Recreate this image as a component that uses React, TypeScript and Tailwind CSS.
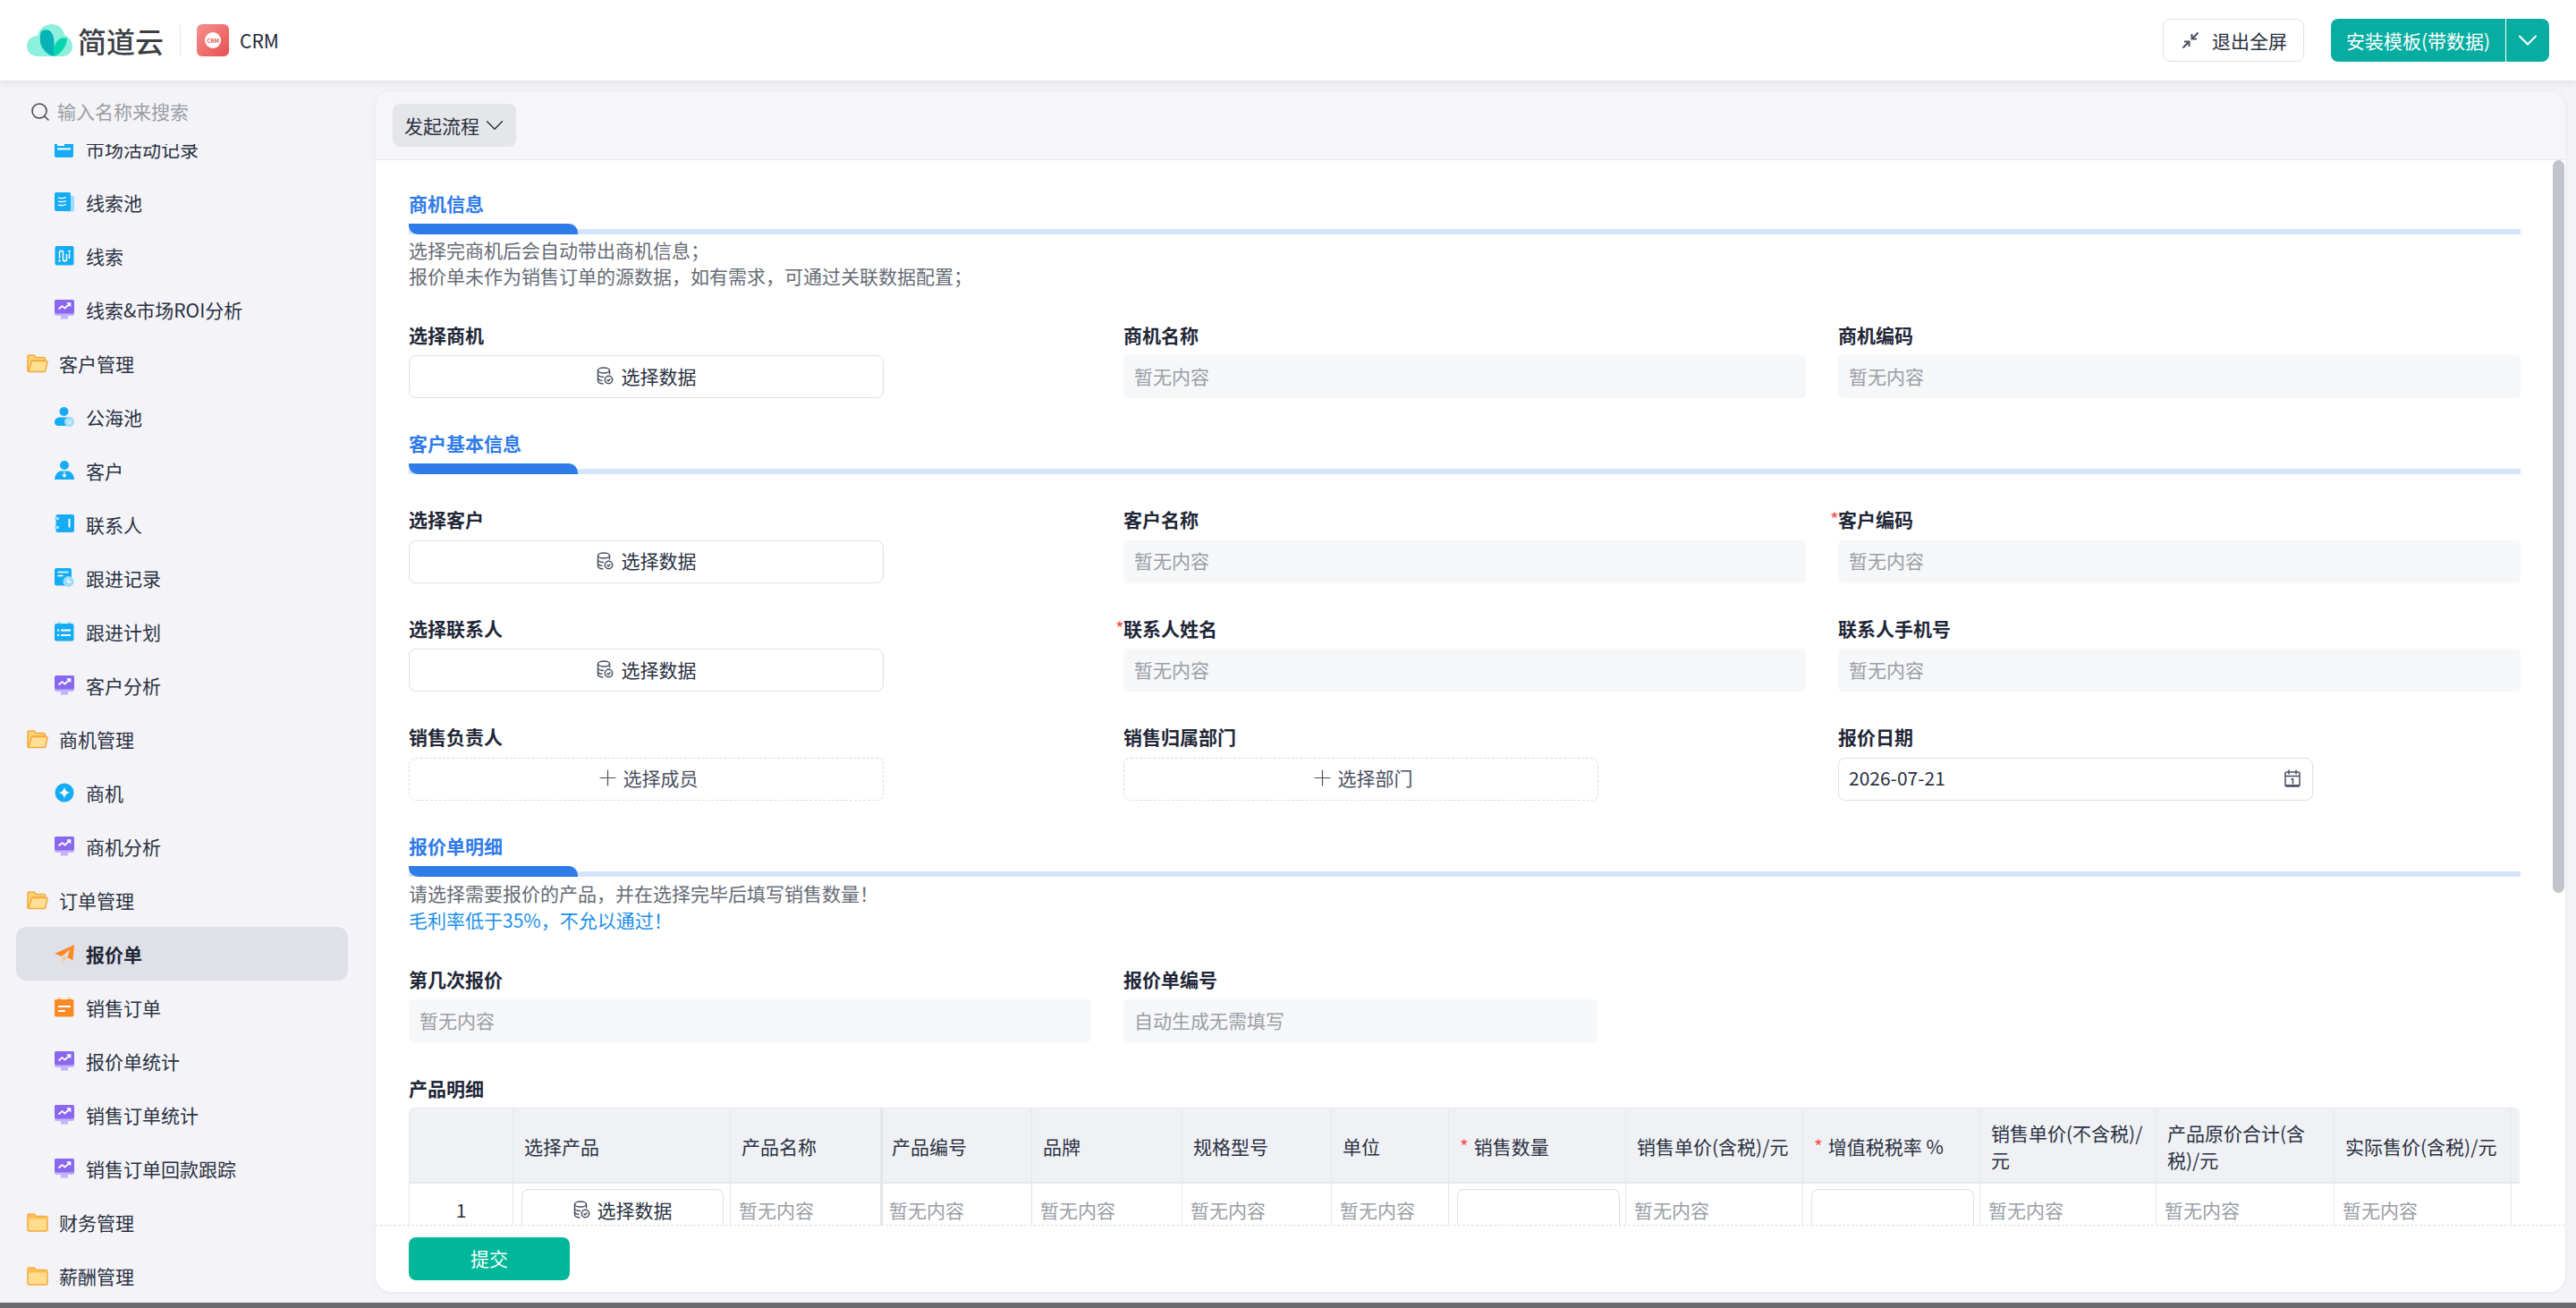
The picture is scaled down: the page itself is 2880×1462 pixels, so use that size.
import { ChevronDown, Plus, Search } from "lucide-react";

// ---- icons ----
function Logo() {
  return (
    <svg width="51" height="36" viewBox="0 0 51 36">
      <path d="M12 36C5 36 0 31 0 24.5 0 18 5 13 12 13 14 5 20 0 28 0c7 0 13 5 14 12 5 2 9 7 9 13 0 6-5 11-11 11Z" fill="#8df0dc" />
      <path d="M16 8c5-3 11-2 13 4 2 5 2 16 1 24-6-1-14-8-15-16-.5-5 0-9 1-12Z" fill="#05b3b8" />
      <path d="M30 36c-1-6 1-16 6-19 3-2 7-2 9-1 0 8-7 18-15 20Z" fill="#06d6b0" />
    </svg>
  );
}

function CrmIcon() {
  return (
    <div className="flex h-[36px] w-[36px] items-center justify-center rounded-[6px] bg-gradient-to-br from-[#f29090] to-[#e84e4e]">
      <div className="flex h-[18px] w-[18px] items-center justify-center rounded-full bg-white text-[6.5px] font-bold leading-none tracking-[-0.2px] text-[#ee5a5a]">
        CRM
      </div>
    </div>
  );
}

function ExitFull() {
  return (
    <svg width="20" height="20" viewBox="0 0 20 20" fill="none" stroke="#4a5060" strokeWidth="2">
      <path d="M18.5 1.5 11.5 8.5M11.5 3v5.5H17" />
      <path d="M1.5 18.5 8 12M3 11.5h5.5V17" />
    </svg>
  );
}

function DataIcon() {
  return (
    <svg width="19" height="20" viewBox="0 0 19 20" fill="none" stroke="#4a5060" strokeWidth="1.5">
      <ellipse cx="8" cy="4" rx="6.5" ry="3" />
      <path d="M1.5 4v12c0 1.700 3 3 6 3M14.500 4v4.500M1.500 8.500c0 1.700 3 3 6.500 3M1.500 12.500c0 1.500 2 2.700 5 3" />
      <circle cx="13.500" cy="14.500" r="4.200" />
      <path d="m11.700 14.500 1.400 1.400 2.300-2.500" />
    </svg>
  );
}

function CalendarIcon() {
  return (
    <svg width="18" height="20" viewBox="0 0 18 20" fill="none" stroke="#4a5060" strokeWidth="1.500">
      <rect x="1" y="3" width="16" height="16" rx="1.500" />
      <path d="M5 .5v5M13 .5v5M1 7.500h16M9.500 10v6.500M7.500 11.500l2-1.500" />
      <path d="M1 18h16" strokeWidth="2" />
    </svg>
  );
}

function FolderOpen() {
  return (
    <svg width="24" height="21" viewBox="0 0 24 21">
      <path d="M1 18V2.500C1 1.500 1.700 1 2.500 1H8l2.500 2.500H19c1 0 1.500.600 1.500 1.500v2H6.500L3 19.500C1.800 19.500 1 19 1 18Z" fill="#fbd27a" stroke="#f5a93a" strokeWidth="1.500" />
      <path d="M5.500 7.500H22c.8 0 1.200.600 1 1.300L20.800 18.500c-.2.700-.8 1-1.500 1H3c-.8 0-1.100-.500-.9-1.200Z" fill="#ffdf94" stroke="#f5a93a" strokeWidth="1.500" />
    </svg>
  );
}

function FolderClosed() {
  return (
    <svg width="24" height="21" viewBox="0 0 24 21">
      <path d="M1 18V2.500C1 1.500 1.700 1 2.500 1H8l2.500 2.500H21c1 0 2 .800 2 2V18c0 1-.800 2-2 2H3c-1.200 0-2-.800-2-2Z" fill="#ffdc8e" stroke="#f5a93a" strokeWidth="1.500" />
      <path d="M1.500 6.500V3c0-1 .500-1.500 1.500-1.500h5L10.300 4H21c1 0 1.500.500 1.500 1.500v1Z" fill="#f9bf57" />
    </svg>
  );
}

function Monitor() {
  return (
    <svg width="22" height="22" viewBox="0 0 22 22">
      <path d="M7.500 17h7l.8 4.500H6.700Z" fill="#c4b2fb" />
      <rect x="0" y="0" width="22" height="18" rx="2" fill="#c4b2fb" />
      <rect x="0" y="0" width="22" height="15.500" rx="2" fill="#8a68ee" />
      <path d="m4.500 10.500 4-3.500 3 2.500 5.500-5M13.800 4h3.700v3.500" fill="none" stroke="#fff" strokeWidth="1.700" />
    </svg>
  );
}

function Sheet() {
  return (
    <svg width="22" height="22" viewBox="0 0 22 22">
      <rect y="1" width="21" height="20" rx="2" fill="#16acf4" />
      <path d="M3 7h8M3 11.500h15" stroke="#fff" strokeWidth="2" />
    </svg>
  );
}

function WaveDoc() {
  return (
    <svg width="22" height="22" viewBox="0 0 22 22">
      <rect x="14" y="4" width="8" height="17.500" rx="1.500" fill="#9bdcfb" />
      <rect width="18" height="21" rx="2" fill="#16acf4" />
      <path d="M4 6.500c2-1.500 3 1 5 0s2-1 4-.500M4 10.500c2-1.500 3 1 5 0s2-1 4-.500M4 14.500c2-1.500 3 1 5 0s2-1 4-.500" fill="none" stroke="#fff" strokeWidth="1.200" />
    </svg>
  );
}

function LeadIcon() {
  return (
    <svg width="22" height="22" viewBox="0 0 22 22">
      <rect x=".5" width="21" height="21.500" rx="2" fill="#16acf4" />
      <path d="M5.500 14V7c0-2.500 4-2.500 4 0v8c0 2.500 4 2.500 4 0v-6M16.500 8v6" fill="none" stroke="#fff" strokeWidth="1.500" />
      <circle cx="5.500" cy="16.500" r="1.200" fill="#fff" />
      <circle cx="16.500" cy="6" r="1.200" fill="#fff" />
    </svg>
  );
}

function PoolPerson() {
  return (
    <svg width="22" height="22" viewBox="0 0 22 22">
      <circle cx="10.500" cy="5" r="5" fill="#16acf4" />
      <path d="M0 17c0-4 3-5.500 6-5.500h9c3 0 4 1 4 3v6.500H4.500C2 21 0 19.500 0 17Z" fill="#16acf4" />
      <circle cx="16.500" cy="16.500" r="5.500" fill="#9bdcfb" />
      <path d="M13.500 15.500c1.500-1 2.500.8 5.500-.2M13.500 18c1.500-1 2.500.8 5.500-.2" fill="none" stroke="#fff" strokeWidth="1" />
    </svg>
  );
}

function Person() {
  return (
    <svg width="22" height="22" viewBox="0 0 22 22">
      <circle cx="11" cy="5" r="5" fill="#16acf4" />
      <path d="M0 21c0-5 3.500-9 7-9.500h8c3.500.500 7 4.500 7 9.500Z" fill="#16acf4" />
      <path d="M11 12.500v4.500M9.500 16h3L11 18Z" stroke="#fff" strokeWidth="1.200" fill="#fff" />
    </svg>
  );
}

function Notebook() {
  return (
    <svg width="22" height="22" viewBox="0 0 22 22">
      <rect x="1.500" width="20.500" height="20" rx="2" fill="#16acf4" />
      <path d="M0 4.500h5M0 14.500h5" stroke="#9bdcfb" strokeWidth="3" />
      <path d="M16.500 5v9.500" stroke="#fff" strokeWidth="2" />
    </svg>
  );
}

function Record() {
  return (
    <svg width="22" height="22" viewBox="0 0 22 22">
      <rect width="19" height="19.500" rx="2" fill="#16acf4" />
      <path d="M3.500 4.500h12M3.500 8.500h6" stroke="#fff" strokeWidth="1.700" />
      <circle cx="15.500" cy="15" r="6" fill="#9bdcfb" />
      <path d="M15 11.500v4h3.500" fill="none" stroke="#fff" strokeWidth="1.300" />
    </svg>
  );
}

function Plan() {
  return (
    <svg width="22" height="22" viewBox="0 0 22 22">
      <path d="M4 0h3v4H4ZM15 0h3v4h-3Z" fill="#9bdcfb" />
      <rect y="2" width="21.500" height="19.500" rx="2" fill="#16acf4" />
      <path d="M7 9.500h11M7 15h11M3 9.500h2M3 15h2" stroke="#fff" strokeWidth="1.800" />
    </svg>
  );
}

function OrderCal() {
  return (
    <svg width="22" height="22" viewBox="0 0 22 22">
      <path d="M4 0h3v4H4ZM15 0h3v4h-3Z" fill="#ffc387" />
      <rect y="2" width="21.500" height="19.500" rx="2" fill="#fb8a24" />
      <path d="M4 10h14M4 15h8" stroke="#fff" strokeWidth="2" />
    </svg>
  );
}

function Chance() {
  return (
    <svg width="22" height="22" viewBox="0 0 22 22">
      <circle cx="11" cy="11" r="10.500" fill="#16acf4" />
      <path d="M11 4.500c.8 4 2.500 5.700 6.500 6.500-4 .8-5.700 2.500-6.500 6.500-.8-4-2.500-5.700-6.500-6.500 4-.8 5.700-2.500 6.500-6.500Z" fill="#fff" />
    </svg>
  );
}

function Plane() {
  return (
    <svg width="22" height="22" viewBox="0 0 22 22">
      <path d="M9 14.500 9.500 21l5-6Z" fill="#ffc387" />
      <path d="M0 11 22 1l-1.500 17.500-6-3.500L17 6.500 8 14Z" fill="#fb8a24" />
    </svg>
  );
}

// ---- sidebar ----
const menu = [
  { label: "市场活动记录", icon: <Sheet /> },
  { label: "线索池", icon: <WaveDoc /> },
  { label: "线索", icon: <LeadIcon /> },
  { label: "线索&市场ROI分析", icon: <Monitor /> },
  { label: "客户管理", group: "open" },
  { label: "公海池", icon: <PoolPerson /> },
  { label: "客户", icon: <Person /> },
  { label: "联系人", icon: <Notebook /> },
  { label: "跟进记录", icon: <Record /> },
  { label: "跟进计划", icon: <Plan /> },
  { label: "客户分析", icon: <Monitor /> },
  { label: "商机管理", group: "open" },
  { label: "商机", icon: <Chance /> },
  { label: "商机分析", icon: <Monitor /> },
  { label: "订单管理", group: "open" },
  { label: "报价单", icon: <Plane />, active: true },
  { label: "销售订单", icon: <OrderCal /> },
  { label: "报价单统计", icon: <Monitor /> },
  { label: "销售订单统计", icon: <Monitor /> },
  { label: "销售订单回款跟踪", icon: <Monitor /> },
  { label: "财务管理", group: "closed" },
  { label: "薪酬管理", group: "closed" },
];

function Sidebar() {
  return (
    <aside className="flex w-[420px] shrink-0 flex-col overflow-hidden bg-[#f3f3f8]">
      <div className="flex h-[71px] shrink-0 items-center gap-[7px] pb-[2px] pl-[33px] text-[#9a9ea6]">
        <Search size={24} strokeWidth={1.5} color="#444" />
        <span>输入名称来搜索</span>
      </div>
      <div className="flex-1 overflow-hidden">
        <div className="-mt-[25px]">
          {menu.map((m) =>
            m.group ? (
              <div key={m.label} className="ml-[18px] mr-[31px] flex h-[60px] items-center gap-[12px] pl-[12px] text-[#2a3141]">
                {m.group === "open" ? <FolderOpen /> : <FolderClosed />}
                <span>{m.label}</span>
              </div>
            ) : (
              <div
                key={m.label}
                className={
                  m.active
                    ? "ml-[18px] mr-[31px] flex h-[60px] items-center gap-[13px] rounded-[12px] bg-[#e0e1e8] pl-[43px] font-bold text-[#1f2737]"
                    : "ml-[18px] mr-[31px] flex h-[60px] items-center gap-[13px] pl-[43px] text-[#2a3141]"
                }
              >
                <span className="flex w-[22px] justify-center">{m.icon}</span>
                <span>{m.label}</span>
              </div>
            )
          )}
        </div>
      </div>
    </aside>
  );
}

// ---- form bits ----
function SectionTitle({ title }: { title: string }) {
  return (
    <div>
      <div className="pb-[2px] font-bold leading-[27px] text-[#2f7ce9]">{title}</div>
      <div className="relative mt-[7px] h-[12px] w-[2361px]">
        <div className="absolute bottom-0 left-0 h-[6px] w-full bg-[#d4e4fb]" />
        <div className="absolute left-0 top-0 h-[12px] w-[189px] rounded-bl-[10px] rounded-tr-[10px] bg-[#2f7ce9]" />
      </div>
    </div>
  );
}

function Label({ text, required }: { text: string; required?: boolean }) {
  return (
    <div className="relative mb-[7.5px] pb-[2px] font-bold leading-[27px] text-[#1f2737]">
      {required && <span className="absolute -left-[9px] top-0 font-normal text-[#f0504f]">*</span>}
      {text}
    </div>
  );
}

function Empty({ text = "暂无内容", narrow }: { text?: string; narrow?: boolean }) {
  return (
    <div className={narrow ? "flex h-[48px] w-[530px] items-center rounded-[5px] bg-[#f6f7f9] px-[12px] pb-[2px] text-[#9a9ea6]" : "flex h-[48px] items-center rounded-[5px] bg-[#f6f7f9] px-[12px] pb-[2px] text-[#9a9ea6]"}>
      {text}
    </div>
  );
}

function PickData() {
  return (
    <div className="flex h-[48px] w-[531px] items-center justify-center gap-[9px] rounded-[8px] border border-[#dcdfe5] pb-[2px] text-[#2a3141]">
      <DataIcon />
      <span>选择数据</span>
    </div>
  );
}

function PickDashed({ text }: { text: string }) {
  return (
    <div className="flex h-[48px] w-[531px] items-center justify-center gap-[3px] rounded-[8px] border border-dashed border-[#d9dbe0] pb-[2px] text-[#4a5060]">
      <Plus size={29} strokeWidth={1} />
      <span>{text}</span>
    </div>
  );
}

function Field({ label, required, children }: { label: string; required?: boolean; children: React.ReactNode }) {
  return (
    <div>
      <Label text={label} required={required} />
      {children}
    </div>
  );
}

// ---- product table ----
type Col = { head: string; w: string; req?: boolean; kind?: string; thick?: boolean };
const cols: Col[] = [
  { head: "", w: "w-[116px]", kind: "no" },
  { head: "选择产品", w: "w-[243px]", kind: "pick" },
  { head: "产品名称", w: "w-[168px]" },
  { head: "产品编号", w: "w-[169px]", thick: true },
  { head: "品牌", w: "w-[168px]" },
  { head: "规格型号", w: "w-[167px]" },
  { head: "单位", w: "w-[131px]" },
  { head: "销售数量", w: "w-[198px]", req: true, kind: "input" },
  { head: "销售单价(含税)/元", w: "w-[198px]" },
  { head: "增值税税率 %", w: "w-[198px]", req: true, kind: "input" },
  { head: "销售单价(不含税)/\n元", w: "w-[197px]" },
  { head: "产品原价合计(含\n税)/元", w: "w-[199px]" },
  { head: "实际售价(含税)/元", w: "w-[198px]" },
  { head: "", w: "w-[198px]" },
];

function ProductTable() {
  return (
    <div className="mt-[6.5px] w-[2360px] overflow-hidden rounded-t-[6px] border-l border-t border-[#e5e7ec]">
      <div className="flex w-max border-b-2 border-[#e7e8ed] bg-[#f0f1f5]">
        {cols.map((c, i) => (
          <div
            key={i}
            className={
              c.thick
                ? `flex h-[82px] shrink-0 items-center whitespace-pre-line border-l-2 border-r border-[#e2e4ea] pl-[10px] pr-[8px] pt-[2px] leading-[30px] text-[#2a3141] ${c.w}`
                : `flex h-[82px] shrink-0 items-center whitespace-pre-line border-r border-[#e5e7ec] pl-[12px] pr-[8px] pt-[2px] leading-[30px] text-[#2a3141] ${c.w}`
            }
          >
            {c.req && <span className="mr-[6px] text-[#f0504f]">*</span>}
            <span>{c.head}</span>
          </div>
        ))}
      </div>
      <div className="flex w-max">
        {cols.map((c, i) => (
          <div
            key={i}
            className={
              c.thick
                ? `h-[60px] shrink-0 border-l-2 border-r border-[#e2e4ea] pl-[7px] pt-[6px] ${c.w}`
                : `h-[60px] shrink-0 border-r border-[#e5e7ec] pl-[9px] pt-[6px] ${c.w}`
            }
          >
            {c.kind === "no" && <div className="flex h-[48px] items-center justify-center pb-[2px] pr-[9px] text-[#2a3141]">1</div>}
            {c.kind === "pick" && (
              <div className="flex h-[48px] w-[226px] items-center justify-center gap-[8px] rounded-[8px] border border-[#dcdfe5] pb-[2px] text-[#2a3141]">
                <DataIcon />
                <span>选择数据</span>
              </div>
            )}
            {c.kind === "input" && <div className="h-[48px] w-[182px] rounded-[8px] border border-[#dcdfe5]" />}
            {!c.kind && <div className="flex h-[48px] items-center pb-[2px] text-[#9a9ea6]">暂无内容</div>}
          </div>
        ))}
      </div>
    </div>
  );
}

export default function App() {
  return (
    <div className="flex h-[1462px] w-[2880px] flex-col overflow-hidden bg-[#f3f3f8] font-['Noto_Sans_CJK_SC','Noto_Sans',sans-serif] text-[21px] leading-[29px]">
      {/* top bar */}
      <header className="relative z-10 flex h-[90px] shrink-0 items-center bg-white pl-[30px] pr-[30px] shadow-[0_2px_10px_rgba(40,40,70,0.1)]">
        <Logo />
        <span className="ml-[6px] text-[32px] font-medium leading-none text-[#3d4045]">简道云</span>
        <div className="ml-[18px] h-[36px] w-px bg-[#e9eaee]" />
        <div className="ml-[18px]">
          <CrmIcon />
        </div>
        <span className="ml-[12px] text-[#1f2737]">CRM</span>
        <div className="ml-auto flex items-center gap-[30px]">
          <div className="flex h-[48px] w-[158px] items-center gap-[14px] rounded-[8px] border border-[#dde1e8] pl-[20px] text-[#2a3141]">
            <ExitFull />
            <span>退出全屏</span>
          </div>
          <div className="flex h-[48px] w-[244px] items-center rounded-[8px] bg-[#07ada1] text-white">
            <span className="flex h-full w-[196px] items-center justify-center border-r border-white">安装模板(带数据)</span>
            <span className="flex flex-1 justify-center">
              <ChevronDown size={36} strokeWidth={1.4} />
            </span>
          </div>
        </div>
      </header>

      <div className="flex min-h-0 flex-1">
        <Sidebar />
        {/* content card */}
        <main className="mb-[12px] mr-[12px] mt-[12px] flex min-w-0 flex-1 flex-col overflow-hidden rounded-[18px] bg-white shadow-[0_0_6px_rgba(40,40,70,0.06)]">
          <div className="flex h-[77px] shrink-0 items-center border-b border-[#e6e7eb] bg-[#f6f6fa] pl-[19px]">
            <div className="flex h-[48px] w-[138px] items-center gap-0 rounded-[8px] bg-[#e4e6ea] pl-[13px] text-[#2a3141]">
              <span>发起流程</span>
              <ChevronDown size={34} strokeWidth={1} />
            </div>
          </div>

          <div className="relative min-h-0 flex-1 overflow-hidden pl-[37px] pt-[35px]">
            {/* scrollbar thumb */}
            <div className="absolute right-[1px] top-0 h-[819px] w-[13px] rounded-full bg-[#c1c4cc]" />

            <SectionTitle title="商机信息" />
            <div className="mt-[3.5px] leading-[27px] text-[#666b75]">
              <div className="pb-[2px]">选择完商机后会自动带出商机信息；</div>
              <div className="pb-[2px]">报价单未作为销售订单的源数据，如有需求，可通过关联数据配置；</div>
            </div>
            <div className="mt-[37px] grid w-[2361px] grid-cols-3 gap-x-[36px]">
              <Field label="选择商机"><PickData /></Field>
              <Field label="商机名称"><Empty /></Field>
              <Field label="商机编码"><Empty /></Field>
            </div>

            <div className="mt-[36.5px]">
              <SectionTitle title="客户基本信息" />
            </div>
            <div className="mt-[37.5px] grid w-[2361px] grid-cols-3 gap-x-[36px] gap-y-[37px]">
              <Field label="选择客户"><PickData /></Field>
              <Field label="客户名称"><Empty /></Field>
              <Field label="客户编码" required><Empty /></Field>
              <Field label="选择联系人"><PickData /></Field>
              <Field label="联系人姓名" required><Empty /></Field>
              <Field label="联系人手机号"><Empty /></Field>
              <Field label="销售负责人"><PickDashed text="选择成员" /></Field>
              <Field label="销售归属部门"><PickDashed text="选择部门" /></Field>
              <Field label="报价日期">
                <div className="flex h-[48px] w-[531px] items-center justify-between rounded-[8px] border border-[#dcdfe5] pb-[2px] pl-[11px] pr-[13px] text-[#2a3141]">
                  <span>2026-07-21</span>
                  <CalendarIcon />
                </div>
              </Field>
            </div>

            <div className="mt-[37.5px]">
              <SectionTitle title="报价单明细" />
            </div>
            <div className="mt-[3.5px] leading-[28px] text-[#666b75]">
              <div className="pb-[2px]">请选择需要报价的产品，并在选择完毕后填写销售数量！</div>
              <div className="pb-[2px] text-[#1c8fe8]">毛利率低于35%，不允以通过！</div>
            </div>
            <div className="mt-[37px] grid w-[2361px] grid-cols-3 gap-x-[36px]">
              <Field label="第几次报价"><Empty /></Field>
              <Field label="报价单编号"><Empty text="自动生成无需填写" narrow /></Field>
            </div>

            <div className="mt-[37.5px] pb-[2px] font-bold leading-[27px] text-[#1f2737]">产品明细</div>
            <ProductTable />
          </div>

          <div className="flex h-[75px] shrink-0 items-start border-t border-dashed border-[#dddee2] pl-[37px] pt-[13px]">
            <div className="flex h-[48px] w-[180px] items-center justify-center rounded-[8px] bg-[#00b899] pb-[2px] text-white">提交</div>
          </div>
        </main>
      </div>

      <div className="h-[6px] shrink-0 bg-[#6b6b6e]" />
    </div>
  );
}
